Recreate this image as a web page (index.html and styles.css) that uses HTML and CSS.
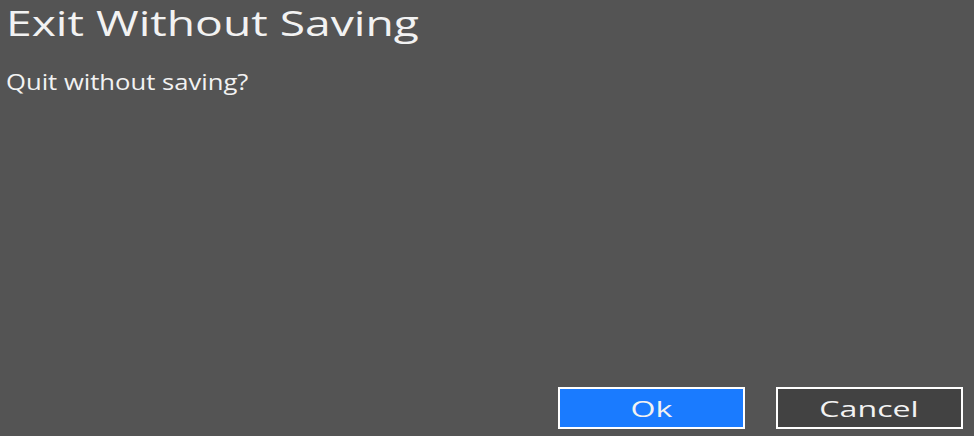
FILE: index.html
```html
<!DOCTYPE html>
<html lang="en">
  <head>
    <meta charset="UTF-8" />
    <title>Exit Without Saving</title>
    <link rel="stylesheet" href="styles.css">
  </head>
  <body>
    <div class="dialog">
      <h1 class="title"><span>Exit Without Saving</span></h1>
      <p class="message"><span>Quit without saving?</span></p>
      <div class="actions">
        <button class="btn btn-ok"><span>Ok</span></button>
        <button class="btn btn-cancel"><span>Cancel</span></button>
      </div>
    </div>
  </body>
</html>
```

FILE: styles.css
```css
html,
body {
  margin: 0;
  padding: 0;
  height: 100%;
}
body {
  background: #545454;
  font-family: "Open Sans", "DejaVu Sans", sans-serif;
  color: #f2f2f2;
}
.dialog {
  height: 100%;
  box-sizing: border-box;
  padding: 0 11px 7px 6px;
  display: flex;
  flex-direction: column;
}
.title span,
.message span,
.btn span {
  display: inline-block;
  transform-origin: left center;
}
.title {
  margin: 0;
  font-size: 35px;
  font-weight: normal;
  line-height: 45px;
}
.title span {
  transform: scaleX(1.32);
}
.message {
  margin: 23px 0 0;
  font-size: 21px;
  line-height: 28px;
}
.message span {
  transform: scaleX(1.22);
}
.actions {
  margin-top: auto;
  display: flex;
  justify-content: flex-end;
  gap: 31px;
}
.btn {
  width: 187px;
  height: 42px;
  border: 2px solid #fff;
  font-family: inherit;
  font-size: 22px;
  color: #f2f2f2;
  padding: 0;
}
.btn span {
  transform: scaleX(1.46);
  transform-origin: center center;
}
.btn-ok {
  background: #1a7bff;
}
.btn-cancel {
  background: #424242;
}
```
